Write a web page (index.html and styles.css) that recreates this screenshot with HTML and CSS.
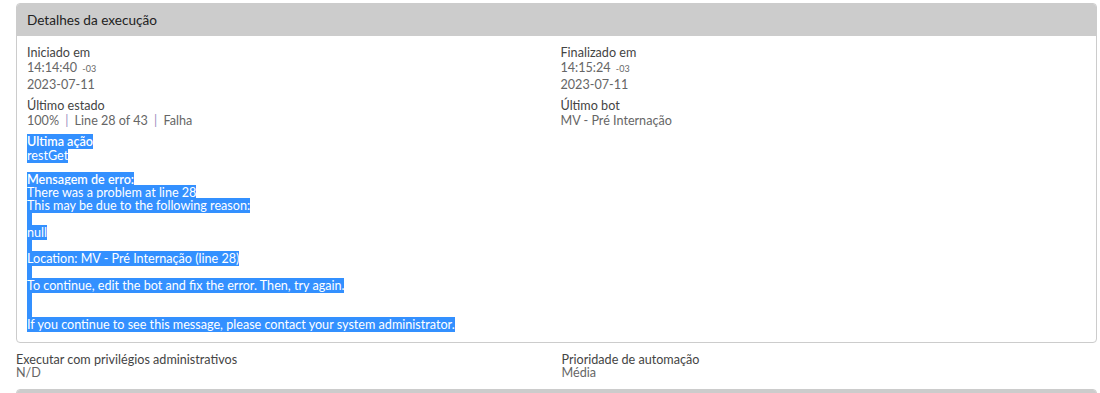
FILE: index.html
```html
<!DOCTYPE html>
<html lang="pt">
<head>
<meta charset="utf-8">
<title>Detalhes da execução</title>
<link rel="stylesheet" href="styles.css">
</head>
<body>
<div class="wrap">
  <section class="panel">
    <header class="panel-head">Detalhes da execução</header>
    <div class="panel-body">
      <div class="col">
        <div class="field">
          <div class="label">Iniciado em</div>
          <div class="value time">14:14:40 <span class="tz">-03</span></div>
          <div class="value date">2023-07-11</div>
        </div>
        <div class="field">
          <div class="label">Último estado</div>
          <div class="value">100% <span class="sep">|</span> Line 28 of 43 <span class="sep">|</span> Falha</div>
        </div>
      </div>
      <div class="col">
        <div class="field">
          <div class="label">Finalizado em</div>
          <div class="value time">14:15:24 <span class="tz">-03</span></div>
          <div class="value date">2023-07-11</div>
        </div>
        <div class="field">
          <div class="label">Último bot</div>
          <div class="value">MV - Pré Internação</div>
        </div>
      </div>
      <div class="error">
        <div class="action">
          <div class="line"><span class="sel strong">Ultima ação</span></div>
          <div class="line"><span class="sel">restGet</span></div>
        </div>
        <div class="message">
          <div class="mline"><span class="sel strong">Mensagem de erro:</span></div>
          <div class="mline"><span class="sel">There was a problem at line 28 </span></div>
          <div class="mline"><span class="sel">This may be due to the following reason: </span></div>
          <div class="mline"><span class="sel nl"></span></div>
          <div class="mline"><span class="sel">null</span></div>
          <div class="mline"><span class="sel nl"></span></div>
          <div class="mline"><span class="sel">Location: MV - Pré Internação (line 28)</span></div>
          <div class="mline"><span class="sel nl"></span></div>
          <div class="mline"><span class="sel">To continue, edit the bot and fix the error. Then, try again. </span></div>
          <div class="mline"><span class="sel nl"></span></div>
          <div class="mline"><span class="sel nl"></span></div>
          <div class="mline"><span class="sel">If you continue to see this message, please contact your system administrator.</span></div>
        </div>
      </div>
    </div>
  </section>
  <div class="extra">
    <div class="field">
      <div class="label">Executar com privilégios administrativos</div>
      <div class="value">N/D</div>
    </div>
    <div class="field">
      <div class="label">Prioridade de automação</div>
      <div class="value">Média</div>
    </div>
  </div>
  <section class="panel next">
    <header class="panel-head"></header>
  </section>
</div>
</body>
</html>
```
FILE: styles.css
```css
html, body {
  margin: 0;
  padding: 0;
  background: #ffffff;
}
body {
  font-family: Lato, "Open Sans", sans-serif;
  font-size: 12.6px;
  color: #444;
}
.wrap {
  padding: 3px 3px 0 16px;
}
.panel {
  border: 1px solid #cccccc;
  border-radius: 4px;
  overflow: hidden;
  background: #fff;
}
.panel-head {
  background: #cccccc;
  height: 32px;
  line-height: 32px;
  padding-left: 10px;
  font-size: 13.6px;
  color: #222;
}
.panel-body {
  display: grid;
  grid-template-columns: 1fr 1fr;
  column-gap: 8px;
  padding: 9px 10px 11px 10px;
}
.field + .field {
  margin-top: 5px;
}
.label {
  line-height: 15px;
  color: #444;
}
.value {
  line-height: 15px;
  color: #666;
}
.value.date {
  line-height: 16px;
  margin-top: 1px;
}
.tz {
  font-size: 9px;
  margin-left: 2px;
}
.sep {
  color: #9a8cc0;
  margin: 0 3px;
}
.error {
  grid-column: 1 / -1;
  margin-top: 7px;
}
.line {
  line-height: 14px;
  height: 14px;
}
.message {
  margin-top: 10px;
}
.mline {
  line-height: 13.2px;
  height: 13.2px;
}
.sel {
  background: #3390ff;
  color: #ffffff;
}
.strong {
  font-weight: 600;
}
.nl {
  display: inline-block;
  width: 5px;
  height: 13.2px;
  vertical-align: top;
}
.extra {
  display: grid;
  grid-template-columns: 1fr 1fr;
  column-gap: 10px;
  margin-top: 10px;
}
.extra .field + .field {
  margin-top: 0;
}
.extra .label {
  line-height: 13px;
}
.extra .value {
  line-height: 13px;
}
.panel.next {
  margin-top: 10px;
}
```
